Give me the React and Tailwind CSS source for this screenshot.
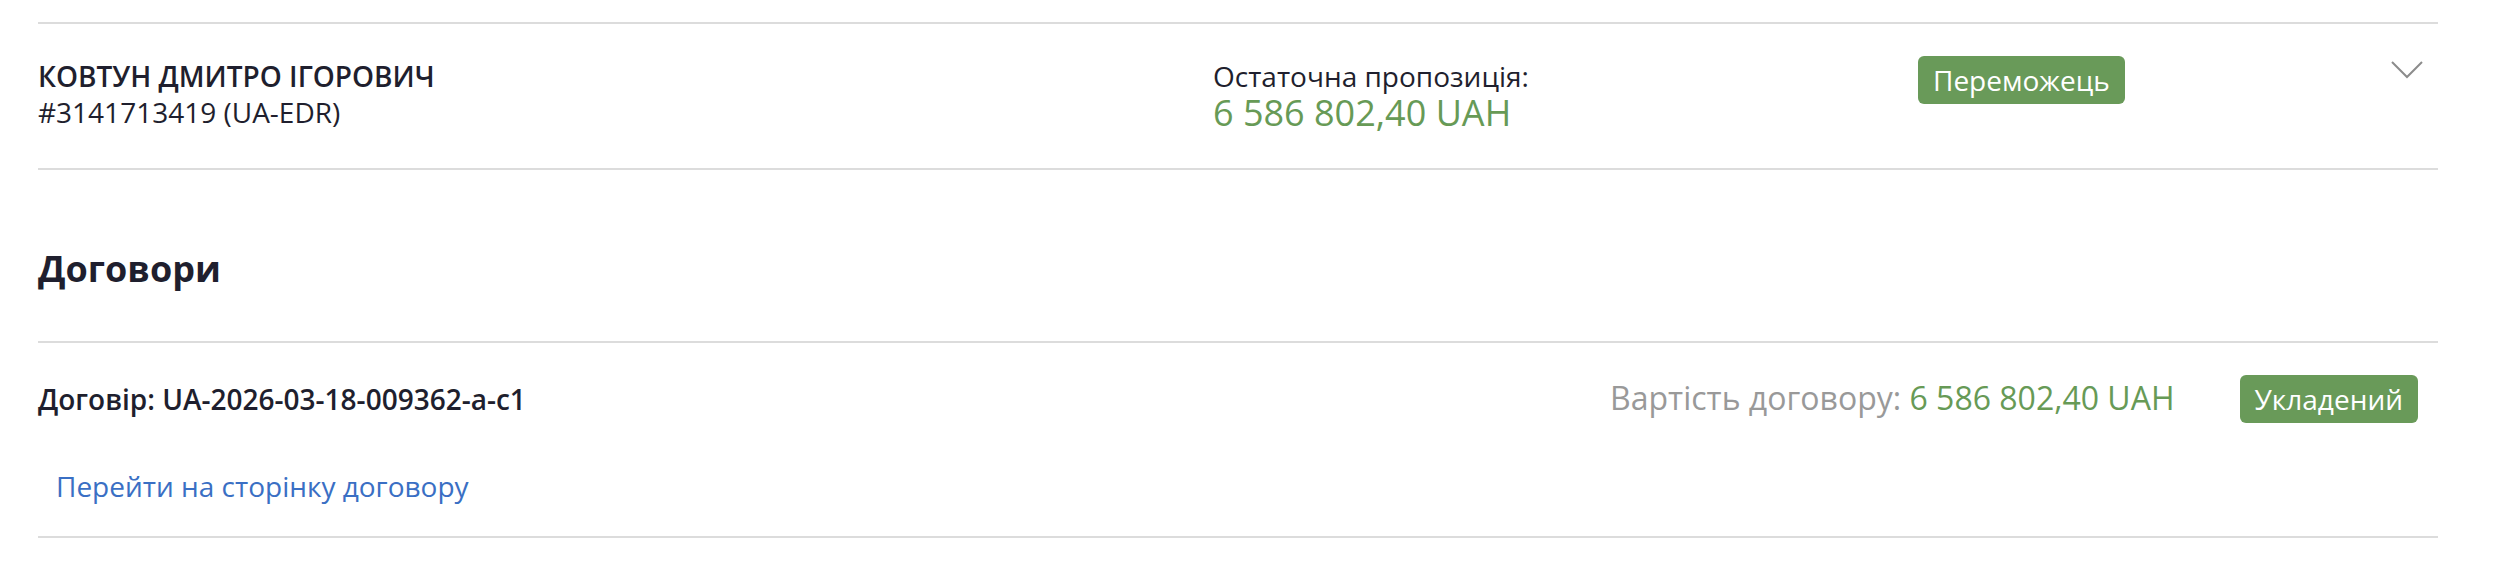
import React from "react";

const font = { fontFamily: '"Open Sans", "Noto Sans", sans-serif' };

const Badge = ({ children, className = "" }) => (
  <span
    className={`inline-block rounded-[6px] bg-[#699a59] px-[15px] py-[5px] text-[28px] leading-[38px] text-white ${className}`}
  >
    {children}
  </span>
);

const Chevron = () => (
  <svg width="34" height="20" viewBox="0 0 34 20" fill="none" className="shrink-0">
    <polyline points="2,2 17,17 32,2" stroke="#8c8c8c" strokeWidth="2" />
  </svg>
);

export default function App() {
  return (
    <div className="min-h-[568px] bg-white pl-[38px] pr-[64px] pt-[22px] text-[#1f1f2e]" style={font}>
      {/* bidder */}
      <div className="flex items-start border-y-2 border-[#dcdcdc] pt-[34px] pb-[36px]">
        <div className="w-[1175px] shrink-0 text-[28px] leading-[36px]">
          <div className="font-semibold">КОВТУН ДМИТРО ІГОРОВИЧ</div>
          <div>#3141713419 (UA-EDR)</div>
        </div>
        <div className="w-[705px] shrink-0">
          <div className="text-[28px] leading-[36px]">Остаточна пропозиція:</div>
          <div className="text-[36px] leading-[38px] text-[#679a56]">6 586 802,40 UAH</div>
        </div>
        <div className="-mt-[2px] flex-1">
          <Badge>Переможець</Badge>
        </div>
        <div className="mr-[14px] mt-[2px]">
          <Chevron />
        </div>
      </div>

      {/* contracts */}
      <h2 className="mt-[75px] mb-[48px] text-[36px] font-bold leading-[48px]">Договори</h2>

      <div className="border-y-2 border-[#dcdcdc] pt-[32px] pb-[32px]">
        <div className="flex items-baseline pr-[20px]">
          <div className="flex-1 text-[28px] font-semibold leading-[36px]">
            Договір: UA-2026-03-18-009362-a-c1
          </div>
          <div className="text-[32px] leading-[44px]">
            <span className="text-[#999999]">Вартість договору: </span>
            <span className="text-[#679a56]">6 586 802,40 UAH</span>
          </div>
          <Badge className="ml-[65px]">Укладений</Badge>
        </div>
        <a href="#" className="mt-[45px] ml-[18px] block text-[28px] leading-[36px] text-[#3a6fc4]">
          Перейти на сторінку договору
        </a>
      </div>
    </div>
  );
}
